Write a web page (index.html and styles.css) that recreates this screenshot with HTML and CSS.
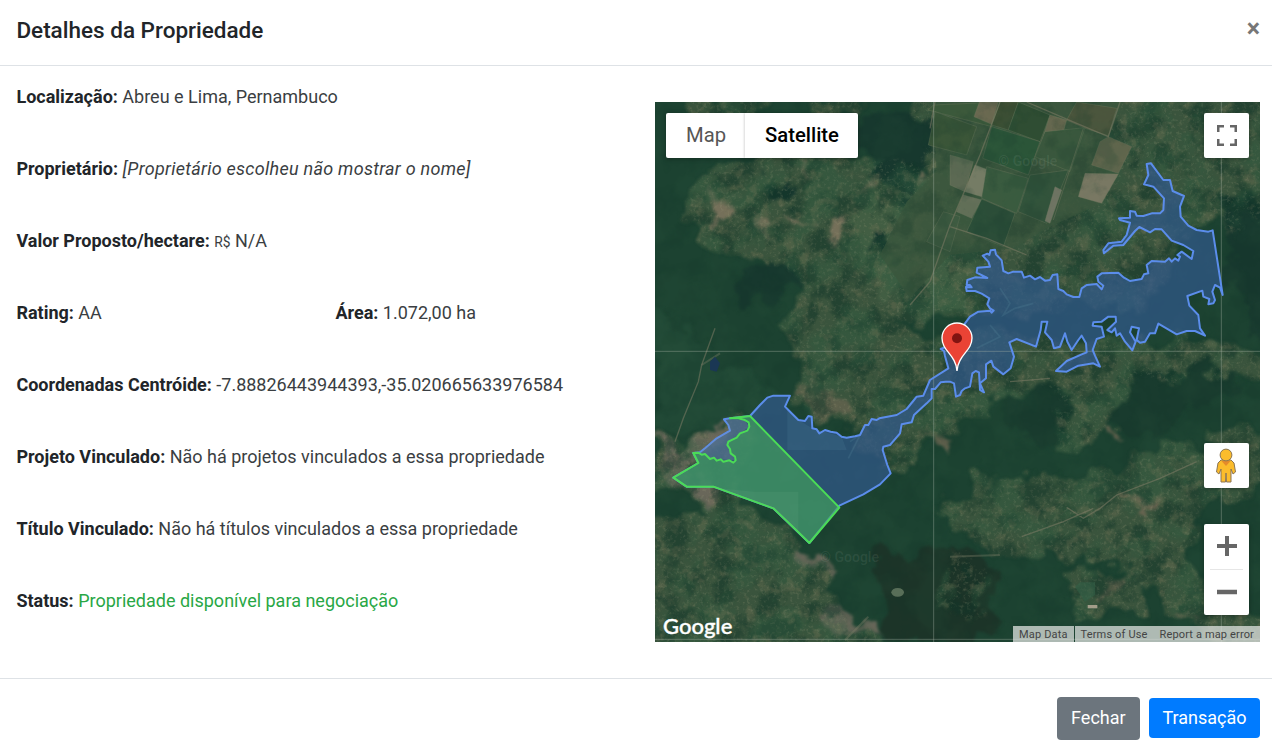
FILE: index.html
```html
<!DOCTYPE html>
<html lang="pt-BR">
<head>
<meta charset="utf-8">
<title>Detalhes da Propriedade</title>
<link rel="stylesheet" href="styles.css">
</head>
<body>
<div class="modal">
  <header class="modal-header">
    <h5 class="title">Detalhes da Propriedade</h5>
    <button class="close" aria-label="Fechar">×</button>
  </header>
  <main class="modal-body">
    <section class="details">
      <p><b>Localização:</b> Abreu e Lima, Pernambuco</p>
      <p><b>Proprietário:</b> <i>[Proprietário escolheu não mostrar o nome]</i></p>
      <p><b>Valor Proposto/hectare:</b> <small>R$</small> N/A</p>
      <div class="pair"><p><b>Rating:</b> AA</p><p><b>Área:</b> 1.072,00 ha</p></div>
      <p><b>Coordenadas Centróide:</b> -7.88826443944393,-35.020665633976584</p>
      <p><b>Projeto Vinculado:</b> Não há projetos vinculados a essa propriedade</p>
      <p><b>Título Vinculado:</b> Não há títulos vinculados a essa propriedade</p>
      <p><b>Status:</b> <span class="ok">Propriedade disponível para negociação</span></p>
    </section>
    <section class="map">
      <svg class="terrain" viewBox="-885 21 1815 1620" preserveAspectRatio="none">
        <defs>
          <filter id="rough" filterUnits="userSpaceOnUse" x="-985" y="-79" width="2015" height="1820" color-interpolation-filters="sRGB">
            <feTurbulence type="fractalNoise" baseFrequency="0.012" numOctaves="4" seed="4" result="n"/>
            <feDisplacementMap in="SourceGraphic" in2="n" scale="130" xChannelSelector="R" yChannelSelector="G"/>
            <feGaussianBlur stdDeviation="5"/>
          </filter>
          <filter id="soft" filterUnits="userSpaceOnUse" x="-985" y="-79" width="2015" height="1820"><feGaussianBlur stdDeviation="2"/></filter>
          <filter id="shade" filterUnits="userSpaceOnUse" x="-885" y="21" width="1815" height="1620" color-interpolation-filters="sRGB">
            <feTurbulence type="fractalNoise" baseFrequency="0.014" numOctaves="5" seed="9"/>
            <feColorMatrix values="0 0 0 0 .07  0 0 0 0 .21  0 0 0 0 .16  5 0 0 0 -2.3"/>
          </filter>
          <filter id="green" filterUnits="userSpaceOnUse" x="-885" y="21" width="1815" height="1620" color-interpolation-filters="sRGB">
            <feTurbulence type="fractalNoise" baseFrequency="0.009" numOctaves="5" seed="33"/>
            <feColorMatrix values="0 0 0 0 .2  0 0 0 0 .37  0 0 0 0 .26  0 0 4 0 -1.7"/>
          </filter>
          <filter id="tan" filterUnits="userSpaceOnUse" x="-885" y="21" width="1815" height="1620" color-interpolation-filters="sRGB">
            <feTurbulence type="fractalNoise" baseFrequency="0.026" numOctaves="5" seed="21"/>
            <feColorMatrix values="0 0 0 0 .5  0 0 0 0 .48  0 0 0 0 .36  0 5 0 0 -2.75"/>
          </filter>
          <filter id="grain" filterUnits="userSpaceOnUse" x="-885" y="21" width="1815" height="1620" color-interpolation-filters="sRGB">
            <feTurbulence type="fractalNoise" baseFrequency="0.1" numOctaves="3" seed="2"/>
            <feColorMatrix values="0 0 0 0 .6  0 0 0 0 .6  0 0 0 0 .48  0 0 4 0 -2.15"/>
          </filter>
          <g id="land">
            <path d="M-770 0H-580L-570 70-760 80ZM-450 0L-280 0-290 60-420 60ZM-770 260L-600 200-450 150-300 170-200 200-100 200V640L-220 640-450 600-520 490-700 470-780 390Z"/>
            <path d="M-110 -20H500L980 0 980 330 830 420 780 360 700 440 600 640 0 660-180 700-350 840-450 830-500 700-450 560-250 500-100 530-130 330-60 200Z"/>
            <path d="M-450 790L-250 690-60 720 560 740 850 740 960 800 940 880 780 820 540 870 500 1000 330 1060 300 990 390 930 220 870 60 960-60 1060-230 1130-260 1000-460 950Z"/>
            <path d="M-50 1210L60 1220 80 1130 200 1160 260 1130 330 1130 520 1120 580 1060 700 1060 830 1080 780 1000 930 1010 980 1140 750 1250 720 1470 980 1560 930 1680 800 1640 500 1400 200 1380 40 1330Z"/>
            <path d="M-885 1030L-800 1060-650 970-580 980-650 1210-500 1280-430 1380-350 1440-340 1540-180 1680H-930V1280L-700 1260-780 1200-930 1190Z"/>
            <path d="M0 1400L80 1410 100 1560 -20 1550ZM350 1430L600 1420 560 1560 350 1560Z"/>
          </g>
          <mask id="rural" maskUnits="userSpaceOnUse" x="-885" y="21" width="1815" height="1620"><use href="#land" fill="#fff" filter="url(#rough)"/></mask>
          <path id="lake" d="M45 685L60 665 85 650 120 647 125 653 131 647 120 640 112 628 118 610 95 596 75 588 50 588 48 576 65 577 60 570 50 570 52 555 75 547 112 549 80 533 82 518 120 515 115 500 98 482 112 476 118 480 122 466 135 464 138 478 155 496 160 528 175 535 190 530 215 530 222 548 240 542 255 553 270 546 285 557 300 555 308 540 322 538 325 582 340 588 350 598 370 606 388 606 395 580 410 570 440 567 455 583 460 572 445 560 442 545 455 535 505 533 522 548 540 558 575 552 582 538 595 535 590 510 605 498 645 500 657 490 665 500 675 490 685 497 690 485 682 480 695 470 725 492 730 468 700 450 665 437 635 403 615 402 600 412 568 396 555 408 520 450 490 452 462 475 460 465 475 445 515 440 530 420 540 383 510 375 507 370 540 368 540 348 555 350 560 362 580 363 605 355 630 355 640 345 642 310 610 275 582 268 595 240 590 207 603 205 640 255 660 255 668 288 702 303 690 335 692 365 715 392 740 405 775 410 788 406 818 600 810 578 795 570 787 590 795 615 790 625 775 628 778 612 760 605 757 587 712 603 718 632 745 660 750 700 765 722 735 708 710 708 680 718 625 686 615 715 600 715 585 740 570 743 560 735 567 700 545 695 540 712 557 740 547 766 525 740 510 715 500 722 495 700 485 712 472 705 498 680 497 665 475 665 455 680 430 682 428 692 455 695 462 725 440 732 428 765 435 782 450 815 430 805 385 812 350 830 318 828 350 798 395 778 410 772 408 745 395 722 385 735 365 765 352 740 345 715 330 755 312 760 305 735 285 712 292 680 275 680 272 705 258 755 200 732 178 742 192 785 182 820 160 838 130 815 124 797 108 808 108 850 90 865 102 892 90 885 87 832 77 828 67 835 60 875 45 880 35 888 30 900 18 905 12 865 0 860-13 860-28 862-45 882-55 882-55 910-70 925-108 960-115 982-145 988-150 1015-180 1050-200 1055-202 1065-188 1110-178 1135-210 1168-260 1198-332 1232-422 1344-530 1240-710 1175-790 1175-830 1148-755 1104-770 1074-750 1072-735 1060-700 1030-660 1007-665 990-678 973-660 970-600 963-570 930-548 908-530 902-480 902-495 935-470 960-455 975-435 978-425 963-415 965-413 1000-400 1003-392 1015-375 1005-358 1010-340 1013-325 1025-310 1028-285 1024-270 1020-255 990-245 990-235 972-220 975-212 970-160 960-130 942-108 915-100 905-80 902-60 855-5 820-15 783-18 768-28 762-10 755 5 760 20 730Z"/>
          <path id="field" d="M-600 963L-332 1238-422 1344-465 1302-530 1240-710 1175-790 1175-830 1148-755 1104-770 1074-755 1073-745 1079-735 1077-720 1092-708 1088-700 1097-688 1093-680 1100-662 1096-650 1103-643 1096-645 1085-658 1075-660 1062-668 1050-665 1040-640 1028-630 1015-608 1007-602 995-604 982-618 974-635 970-660 970Z"/>
        </defs>

        <rect x="-885" y="21" width="1815" height="1620" fill="#1c4231"/>
        <g filter="url(#rough)">
          <use href="#land" fill="#3a543d"/>
          <path d="M-885 650L-780 700-680 820-560 850-430 960-620 970-800 1020H-885Z" fill="#214936"/>
          <path d="M-70 500L-130 400 20 100 60 600-60 640ZM-300 350L-100 300-60 500-210 600Z" fill="#425e43"/>
          <path d="M-885 1040L-800 1070-690 980-650 1000-750 1080-740 1130-690 1190-680 1240-730 1210-850 1180ZM-470 1360L-410 1360-350 1430-340 1460-450 1410ZM-400 1545L-280 1540-200 1630-370 1600Z" fill="#69675a"/>
          <path d="M-720 290L-650 320-690 380-720 340ZM-600 360L-510 390-560 420ZM-490 340L-440 380-470 390ZM-360 380L-300 370-330 470-370 420ZM-440 200L-410 200-420 260ZM-230 240L-200 290-260 330ZM-120 200L-60 240-90 300Z" fill="#75705a"/>
          <path d="M-410 830L-350 870-300 960-380 970-450 920Z" fill="#5c604b"/>
          <path d="M-540 250L-440 280-460 330-530 320ZM-610 515L-480 510-450 560-570 640-640 570ZM-270 40L-90 60 -40 180-100 200-120 330-240 240ZM-240 430L-160 440-170 470-240 470ZM800 280L980 330V780L850 640Z" fill="#17382e"/>
          <path d="M220 890L340 880 390 950 320 1040 180 1030 160 910ZM560 830L820 820 860 880 680 960 640 1040 500 990Z" fill="#193b2e"/>
          <path d="M470 1010L530 1020 470 1030ZM-60 1020L10 1035-20 1080ZM520 1210L620 1220 610 1260 550 1250ZM680 1530L760 1560 730 1590ZM450 1430L500 1440 480 1510Z" fill="#6c6652"/>
          <path d="M-230 1370L130 1400V1641H-200Z" fill="#1c3428"/>
        </g>
        <g mask="url(#rural)">
          <rect x="-885" y="21" width="1815" height="1620" filter="url(#shade)" opacity=".42"/>
          <rect x="-885" y="21" width="1815" height="1620" filter="url(#green)" opacity=".4"/>
          <rect x="-885" y="21" width="1815" height="1620" filter="url(#tan)" opacity=".3"/>
          <rect x="-885" y="21" width="1815" height="1620" filter="url(#grain)" opacity=".2"/>
        </g>

        <!-- cultivated plots -->
        <path d="M-50 21H520L475 125 545 155 455 325 290 400 190 460 0 480-120 610-210 480-130 320-40 230Z" fill="#3b573e" opacity=".8" filter="url(#soft)"/>
        <g filter="url(#soft)" stroke="#7b8065" stroke-opacity=".5" stroke-width="2" opacity=".9">
          <path d="M-50 30L150 21 125 95-65 45Z" fill="#3e5a3b"/><path d="M88 21L145 21 125 88 72 65Z" fill="#756d55"/>
          <path d="M150 21H205L175 105 125 90Z" fill="#3c4e32"/>
          <path d="M205 21L300 60 270 140 175 105Z" fill="#2d4e32"/><path d="M300 60L350 75 320 180 270 155Z" fill="#6a6b51"/>
          <path d="M350 75L405 100 475 122 500 40 380 21Z" fill="#4d563c"/><path d="M125 95L270 140 235 240 98 190Z" fill="#2c5439"/>
          <path d="M405 98L360 230 255 185 285 110Z" fill="#3a593d"/><path d="M475 125L545 155 505 235 425 210 450 140Z" fill="#66674f"/>
          <path d="M405 235L505 237 455 325 385 305Z" fill="#807b67"/><path d="M75 210L115 225 95 305 45 290Z" fill="#7b816b"/>
          <path d="M110 215L235 250 200 355 95 310Z" fill="#3b5b41"/><path d="M240 240L355 225 290 385 205 350Z" fill="#31523b"/>
          <path d="M315 275L335 285 300 385 285 378Z" fill="#747868"/><path d="M40 300L95 315 65 370 20 350Z" fill="#6d745f"/>
          <path d="M95 312L195 355 160 455 50 410Z" fill="#294d37"/><path d="M0 180L70 200 45 290 0 270Z" fill="#616c56"/>
          <path d="M-45 50L-65 150 50 180 80 95Z" fill="#3b5739"/><path d="M-20 350L30 365 0 470-70 440Z" fill="#3f5b42"/>
        </g>
        <rect x="-885" y="21" width="1815" height="1620" filter="url(#shade)" opacity=".18"/>
        <rect x="-885" y="21" width="1815" height="1620" filter="url(#green)" opacity=".12"/>
        <g fill="none" stroke="#858069" stroke-width="4" stroke-opacity=".5" filter="url(#soft)">
          <path d="M-45 21L-60 100M150 21L90 180 0 390-60 560-120 630M0 395L110 430 230 480M230 21L380 85 475 125 510 21M-825 1040L-800 970-755 860-745 810-705 700M350 1237L400 1270 450 1240 500 1200 630 1150 740 1100M215 1325L340 1280 430 1240M180 860L300 850"/>
          <path d="M-745 810L-690 775M-315 1635L-245 1565M0 1385L150 1380" stroke-width="6" stroke-opacity=".35"/>
          <path d="M310 375L400 100" stroke-width="2"/>
        </g>
        <path d="M-720 800L-705 785-690 805-700 830-720 825Z" fill="#1a3754"/>
        <ellipse cx="-157" cy="1492" rx="19" ry="13" fill="#596e58" filter="url(#soft)"/>
        <path d="M375 1475L390 1462H435L435 1500 405 1520Z" fill="#326146" opacity=".6" filter="url(#soft)"/>
        <path d="M413 1530H442V1540H413Z" fill="#a39d8a"/>
        <g class="watermark"><text x="145" y="213">© Google</text><text x="-390" y="1402">© Google</text></g>

        <use href="#lake" fill="#31598a" fill-opacity=".72"/>
        <path d="M-488 935L-455 975-413 1000-325 1025-310 1065H-488Z" fill="#477694" opacity=".25"/>
        <path d="M150 580L180 625 160 660 195 640 250 625M120 690L150 725 80 760M-300 1040L-270 1020-305 1090" fill="none" stroke="#5e91a3" stroke-width="5" opacity=".2" filter="url(#soft)"/>
        <g stroke="#aab5a9" stroke-opacity=".38" stroke-width="3"><path d="M-49 21V1641M814 21V1641M-885 769H930M-885 1633H930"/></g>
        <use href="#lake" fill="none" stroke="#5b8deb" stroke-width="6" stroke-linejoin="round"/>
        <path d="M-673 973L-660 1007-700 1030-750 1072-720 1092-643 1096-668 1050-630 1015-602 995-618 974Z" fill="#8296a1" opacity=".3"/>
        <use href="#field" fill="#43a35a" fill-opacity=".65" stroke="#4bdc56" stroke-width="6" stroke-linejoin="round"/>
        <path d="M-590 1190H-455V1310L-530 1240-690 1180Z" fill="#71b48a" opacity=".13"/>

        <path d="M21 828C18 779-24 769-24 729A45 45 0 0 1 66 729C66 769 24 779 21 828Z" fill="#ea4335" stroke="#fff" stroke-width="4"/>
        <circle cx="21" cy="730" r="15" fill="#811411"/>
      </svg>

      <div class="map-type"><span>Map</span><span class="active">Satellite</span></div>
      <button class="control fullscreen" aria-label="Fullscreen"><svg width="20" height="21" viewBox="0 0 20 21"><path d="M1 7V1H7M13 1h6V7M19 14v6H13M7 20H1V14" fill="none" stroke="#666" stroke-width="3"/></svg></button>
      <button class="control pegman" aria-label="Street View"><svg width="22" height="36" viewBox="0 0 22 36"><path d="M6 12L3 15 1.500 24 4 26 6 21V34H10.500L11 25 11.500 34H16V21L18 26 20.500 24 19 15 16 12Z" fill="#fbbc2c" stroke="#8b7554"/><path d="M6.500 13H15.500L11 18Z" fill="#e58b2a"/><circle cx="11" cy="7" r="5.900" fill="#fbbc2c" stroke="#8b7554"/></svg></button>
      <div class="zoom">
        <button aria-label="Zoom in"><svg width="20" height="20"><path d="M0 10H20M10 0V20" stroke="#666" stroke-width="4"/></svg></button>
        <button aria-label="Zoom out"><svg width="20" height="20"><path d="M0 10H20" stroke="#666" stroke-width="4.500"/></svg></button>
      </div>
      <div class="brand">Google</div>
      <div class="credits"><span>Map Data</span><span class="terms">Terms of Use</span><span>Report a map error</span></div>
    </section>
  </main>
  <footer class="modal-footer">
    <button class="btn secondary">Fechar</button>
    <button class="btn primary">Transação</button>
  </footer>
</div>
</body>
</html>
```
FILE: styles.css
```css
* { box-sizing: border-box; }
body { margin: 0; background: #fff; color: #212529; font: 400 18px/27px Roboto, sans-serif; }
button { border: 0; font-family: inherit; }
.modal { display: flex; flex-direction: column; height: 756px; }
.modal-header { display: flex; justify-content: space-between; height: 66px; padding: 16px 12px 0 16.4px; border-bottom: 1px solid #dee2e6; }
.title { margin: 0; font-size: 22.5px; font-weight: 500; line-height: 28px; }
.close { align-self: flex-start; padding: 0; background: none; color: #777; font: 700 25px/25px Roboto, sans-serif; }
.modal-body { display: flex; justify-content: space-between; height: 612px; padding: 0 12px 0 16.4px; }
.details { display: flex; flex-direction: column; gap: 45px; width: 638px; padding-top: 17px; white-space: nowrap; color: #3a3e42; }
.details p { height: 27px; margin: 0; }
.details b { color: #212529; font-weight: 700; }
.details i { letter-spacing: .27px; }
.details small { font-size: 13.8px; line-height: 1; }
.pair { display: grid; grid-template-columns: 1fr 1fr; }
.details .ok { color: #28a745; }
.map { position: relative; width: 605px; height: 540px; margin-top: 36px; overflow: hidden; background: #1b3f2f; }
.terrain { display: block; width: 100%; height: 100%; }
.watermark { fill: #bccabb; fill-opacity: .11; font: 500 42px Roboto, sans-serif; }
.map-type { position: absolute; top: 11px; left: 11px; display: flex; height: 45px; background: #fff; border-radius: 2px; color: #565656; font: 400 20.25px/45px Roboto, sans-serif; box-shadow: 0 1px 4px rgba(0, 0, 0, .3); }
.map-type span { width: 79px; padding-left: 1px; text-align: center; }
.map-type .active { width: 113px; color: #000; font-weight: 500; box-shadow: -1px 0 2px rgba(0, 0, 0, .15); }
.control { position: absolute; right: 11px; display: flex; align-items: center; justify-content: center; width: 45px; height: 45px; padding: 0; background: #fff; border-radius: 2px; box-shadow: 0 1px 4px rgba(0, 0, 0, .3); }
.fullscreen { top: 11px; }
.pegman { top: 341px; padding-right: 1px; }
.zoom { position: absolute; right: 11px; top: 422px; width: 45px; height: 91px; padding: 0 6px; background: #fff; border-radius: 2px; box-shadow: 0 1px 4px rgba(0, 0, 0, .3); }
.zoom button { display: flex; align-items: center; justify-content: center; width: 100%; height: 45px; padding: 0 0 2px; background: none; }
.zoom button + button { height: 46px; border-top: 1px solid #e6e6e6; }
.brand { position: absolute; left: 8px; bottom: 3px; color: #fff; font: 500 22px/26px Lato, sans-serif; -webkit-text-stroke: .4px #fff; }
.credits { position: absolute; right: 0; bottom: 0; display: flex; height: 16px; color: #444; font: 400 11px/17px Roboto, sans-serif; letter-spacing: .15px; white-space: nowrap; }
.credits span { padding: 0 6px; background: rgba(225, 228, 225, .74); }
.credits .terms { margin-left: 1px; }
.modal-footer { display: flex; align-items: flex-start; justify-content: flex-end; gap: 9px; height: 78px; padding: 18px 12px 0; border-top: 1px solid #dee2e6; }
.btn { padding: 0 13.5px; color: #fff; border-radius: 4px; font-size: 18px; font-weight: 400; }
.secondary { width: 83px; height: 43px; padding-bottom: 2px; background: #6c757d; }
.primary { height: 40px; margin-top: 1px; padding-bottom: 1px; background: #007bff; }
```
